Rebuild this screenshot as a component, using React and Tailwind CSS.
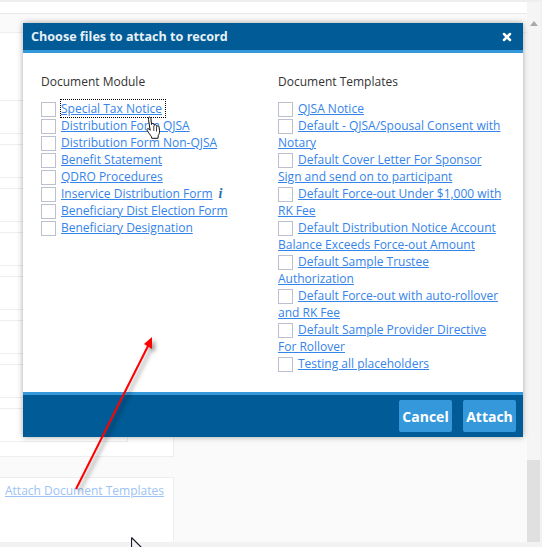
import { X } from 'lucide-react';

const rowHeights = [68, 33, 11, 33, 11, 33, 11, 33, 11, 33, 11, 33, 11, 33, 11, 33];

const moduleDocs = [
  'Special Tax Notice',
  'Distribution Form QJSA',
  'Distribution Form Non-QJSA',
  'Benefit Statement',
  'QDRO Procedures',
  'Inservice Distribution Form',
  'Beneficiary Dist Election Form',
  'Beneficiary Designation',
];

const templateDocs = [
  'QJSA Notice',
  'Default - QJSA/Spousal Consent with Notary',
  'Default Cover Letter For Sponsor Sign and send on to participant',
  'Default Force-out Under $1,000 with RK Fee',
  'Default Distribution Notice Account Balance Exceeds Force-out Amount',
  'Default Sample Trustee Authorization',
  'Default Force-out with auto-rollover and RK Fee',
  'Default Sample Provider Directive For Rollover',
  'Testing all placeholders',
];

function DocRow({ label, focused, info }) {
  return (
    <div className="text-[12px] leading-[17px]">
      <span className="inline-block w-[15px] h-[15px] mt-[2px] mr-[5px] align-top border border-[#bcc0cc] bg-white" />
      <a href="#" className={`text-[#3584ea] underline ${focused ? 'outline-1 outline-dotted outline-black pr-[3px]' : ''}`}>{label}</a>
      {info && <span className="ml-[6px] font-['Liberation_Serif',serif] italic font-bold text-[14px] leading-[14px] text-[#1f6fb5]">i</span>}
    </div>
  );
}

function HandCursor() {
  return (
    <svg width="18" height="24" viewBox="0 0 18 24" className="absolute left-[145px] top-[116px]">
      <path
        d="M3.500 1.500c1-1 2.200-.5 2.400.8l.6 6.200c.2-1.400 2.300-1.500 2.500 0l.2 1c.2-1.200 2.200-1.200 2.400.2l.1.8c.4-1 2.300-.9 2.400.6l.4 3.600c.2 2.200-.4 3.400-1.200 4.600l-.3 3H6.800l-.5-1.800c-1-1.500-2.800-3.800-4.100-6-.8-1.400.5-2.500 1.700-1.500l1.300 1.300-1.500-9.400c-.1-.6-.1-1.100-.2-1.500z"
        fill="#fff"
        stroke="#111"
        strokeWidth="1"
        strokeLinejoin="round"
      />
      <path d="M8.800 10v5M11.500 11v4.500" stroke="#111" strokeWidth="0.8" />
    </svg>
  );
}

export default function App() {
  return (
    <div className="relative w-[542px] h-[547px] overflow-hidden bg-[#f2f2f2] font-['Open_Sans',sans-serif] text-[#333]">
      <div className="h-[2px] bg-[#eeeeee]" />
      <div className="flex h-[540px] w-[540px]">
        <div className="flex-1 flex flex-col bg-[#fafafa]">
          <div className="h-[12px] bg-white border-b border-[#e8e8e8]" />
          <div className="h-[19px] w-full border-b border-[#eeeeee]" />
          <div className="w-[174px] border-r border-b border-[#eeeeee] bg-white pb-[14px]">
            <div className="w-[128px] border-r border-[#eeeeee]">
              {rowHeights.map((h, i) => (
                <div key={i} className="border-b border-[#eeeeee]" style={{ height: h }} />
              ))}
            </div>
          </div>
          <div className="mt-[20px] flex-1 w-[174px] border-t border-r border-[#eeeeee] bg-white pl-[5px] pt-[4px] text-[12px] leading-[18px]">
            <a href="#" className="text-[#9cc3f5] underline">Attach Document Templates</a>
          </div>
        </div>
        <div className="w-[13px] bg-[#f5f5f5] flex flex-col justify-between pt-[19px]">
          <div className="mx-auto w-0 h-0 border-l-[4px] border-r-[4px] border-b-[5px] border-l-transparent border-r-transparent border-b-[#a9a9a9]" />
          <div className="h-[82px] bg-[#e0e0e0]" />
        </div>
      </div>

      {/* modal */}
      <div className="absolute left-[23px] top-[23px] w-[500px] h-[414px] flex flex-col bg-white shadow-[0_0_6px_rgba(0,0,0,0.35)]">
        <div className="h-[30px] flex items-center justify-between pl-[8px] pr-[10px] pt-[1px] bg-[#005b96] border-b-[3px] border-[#3498db]">
          <span className="text-[12.6px] font-bold text-[#e8f1f7]">Choose files to attach to record</span>
          <X size={12} strokeWidth={5} className="text-white -mt-[1px]" />
        </div>
        <div className="flex-1 grid grid-cols-[237px_227px] pl-[18px] pt-[20px]">
          <div>
            <div className="text-[12px] leading-[17px] mb-[10px]">Document Module</div>
            {moduleDocs.map((label, i) => (
              <DocRow key={label} label={label} focused={i === 0} info={i === 5} />
            ))}
          </div>
          <div>
            <div className="text-[12px] leading-[17px] mb-[10px]">Document Templates</div>
            {templateDocs.map((label) => (
              <DocRow key={label} label={label} />
            ))}
          </div>
        </div>
        <div className="h-[45px] flex items-center justify-end gap-[11px] pr-[7px] bg-[#005b96] border-t-[3px] border-[#3498db]">
          <button className="w-[53px] h-[32px] rounded-[2px] bg-[#3498db] text-white text-[14px] font-bold">Cancel</button>
          <button className="w-[53px] h-[32px] rounded-[2px] bg-[#3498db] text-white text-[14px] font-bold">Attach</button>
        </div>
      </div>

      {/* annotations drawn over the screenshot */}
      <HandCursor />
      <svg width="542" height="547" viewBox="0 0 542 547" className="absolute left-0 top-0 pointer-events-none drop-shadow-[3px_3px_2px_rgba(0,0,0,0.4)]">
        <path d="M76 489L149 344" stroke="#ff0000" strokeWidth="2" />
        <path d="M152 337L152 349L144 344z" fill="#ff0000" />
      </svg>
      <svg width="14" height="12" viewBox="0 0 14 12" className="absolute left-[131px] top-[537px]">
        <path d="M.5.500V12M.5.500L12 12" fill="#fff" stroke="#1a1a2a" strokeWidth="1.200" />
      </svg>
    </div>
  );
}
